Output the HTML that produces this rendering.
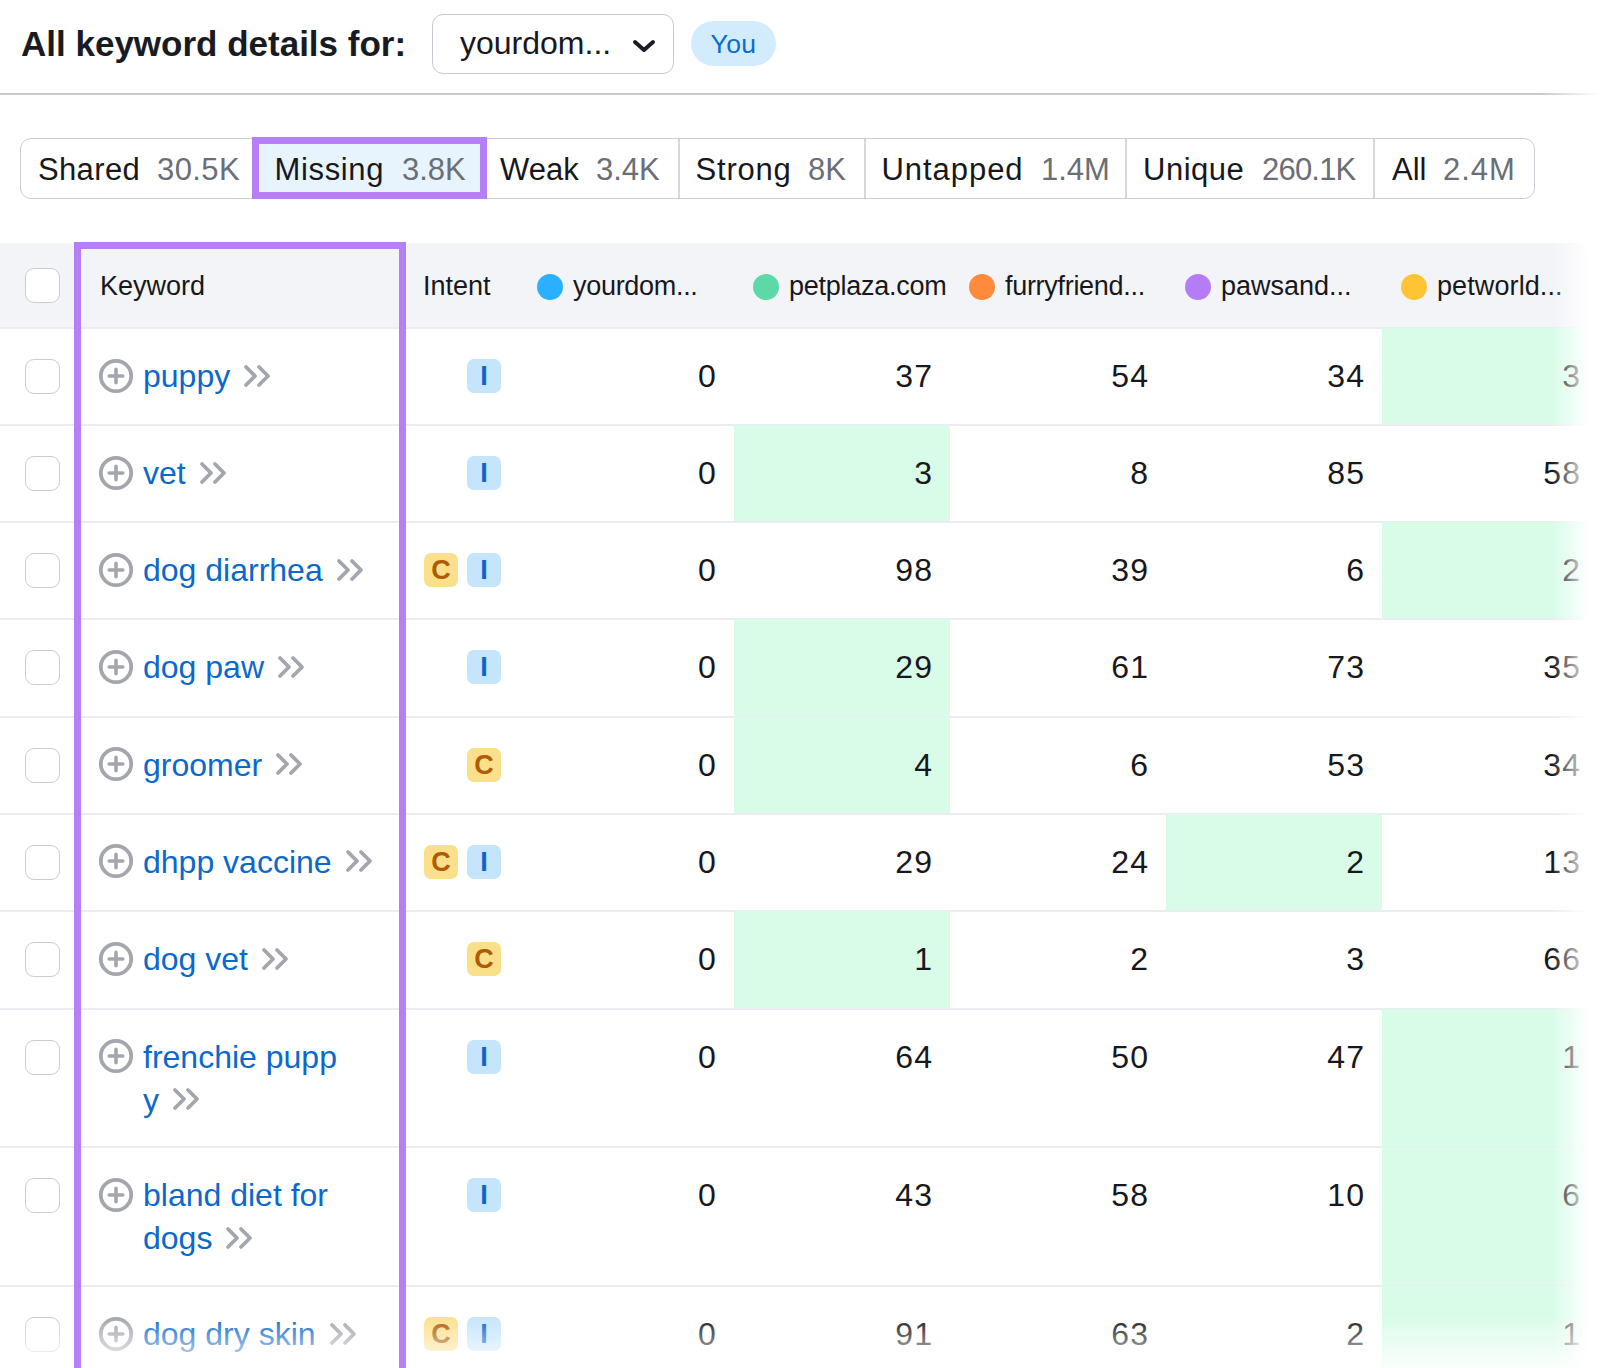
<!DOCTYPE html>
<html><head><meta charset="utf-8">
<style>
*{box-sizing:border-box;margin:0;padding:0}
html,body{width:1600px;height:1368px;overflow:hidden;background:#fff}
body{position:relative;font-family:"Liberation Sans",sans-serif;color:#17181c}
.a{position:absolute;white-space:nowrap}
.title{left:21px;top:23px;font-size:35px;font-weight:700;line-height:42px;color:#191b23}
.dd{left:432px;top:13.5px;width:242px;height:60.5px;border:1.7px solid #c6c9d0;border-radius:11px}
.ddt{left:460px;top:22px;font-size:32px;line-height:42px;color:#17181c}
.you{left:691px;top:21px;width:85px;height:45px;border-radius:23px;background:#d3ecfd;color:#0a6bd1;font-size:26.5px;line-height:46px;text-align:center;letter-spacing:.4px}
.sep{left:0;top:92.5px;width:1600px;height:2.5px;background:linear-gradient(90deg,#c7cad1 0,#c7cad1 1540px,rgba(199,202,209,0) 1600px)}
.tabs{left:19.5px;top:138px;width:1515.5px;height:61px;border:1.7px solid #cacdd4;border-radius:11px}
.tsep{top:139px;width:1.5px;height:59px;background:#d5d7dc}
.tl{top:148.5px;font-size:31px;line-height:42px;color:#17181c}
.tc{top:148.5px;font-size:31px;line-height:42px;color:#6b6e76}
.miss{left:252px;top:137px;width:235px;height:62px;border:7.5px solid #b77ff6;background:#e7f4fd}
.hdr{left:0;top:242.5px;width:1600px;height:84.5px;background:#f3f4f8}
.ht{font-size:27px;line-height:36px;color:#17181c;top:268px}
.dot{width:26px;height:26px;border-radius:50%;top:274px}
.cb{left:24.8px;width:35px;height:35px;border:1.7px solid #cbccd2;border-radius:9px;background:#fff}
.line{left:0;width:1600px;height:2px;background:#ebecf1}
.green{background:#d9fce8}
.kw{left:143px;font-size:32px;line-height:43px;color:#0b68cc}
.num{font-size:32px;line-height:43px;color:#17181c;text-align:right;width:120px;letter-spacing:1.2px}
.badge{width:34px;height:34px;border-radius:7px;font-size:27px;font-weight:700;line-height:35px;text-align:center}
.bi{background:#c5e5fd;color:#0a64d0;left:467px}
.bc{background:#fbe08c;color:#b05b06}
.purple{left:74px;top:242px;width:332px;height:1140px;border:7px solid #b77ff6;border-bottom:none}
.fadeR{left:1500px;top:100px;width:100px;height:1268px;background:linear-gradient(90deg,rgba(255,255,255,0) 0,rgba(255,255,255,0) 52%,#fff 89%)}
.fadeB{left:0;top:1316px;width:1600px;height:52px;background:linear-gradient(180deg,rgba(255,255,255,0) 0,rgba(255,255,255,.88) 100%)}
</style></head>
<body>
<div class="a title">All keyword details for:</div>
<div class="a dd"></div>
<div class="a ddt">yourdom...</div>
<svg class="a" style="left:629.5px;top:37px" width="28" height="18" viewBox="0 0 28 18"><path d="M5 5 L14 13 L23 5" fill="none" stroke="#1b1d24" stroke-width="4" stroke-linecap="round" stroke-linejoin="round"/></svg>
<div class="a you">You</div>
<div class="a sep"></div>

<div class="a tabs"></div>
<div class="a miss"></div>
<div class="a tsep" style="left:678px"></div>
<div class="a tsep" style="left:864px"></div>
<div class="a tsep" style="left:1125px"></div>
<div class="a tsep" style="left:1373px"></div>
<div class="a tl" style="left:38px;letter-spacing:.35px">Shared</div><div class="a tc" style="left:157px;letter-spacing:.4px">30.5K</div>
<div class="a tl" style="left:274.5px;letter-spacing:.65px">Missing</div><div class="a tc" style="left:402px">3.8K</div>
<div class="a tl" style="left:500px">Weak</div><div class="a tc" style="left:596px">3.4K</div>
<div class="a tl" style="left:695.5px;letter-spacing:.8px">Strong</div><div class="a tc" style="left:808px">8K</div>
<div class="a tl" style="left:881.5px;letter-spacing:.95px">Untapped</div><div class="a tc" style="left:1041px">1.4M</div>
<div class="a tl" style="left:1143px;letter-spacing:.5px">Unique</div><div class="a tc" style="left:1262px;letter-spacing:-.8px">260.1K</div>
<div class="a tl" style="left:1392px">All</div><div class="a tc" style="left:1443px;letter-spacing:1px">2.4M</div>

<div class="a hdr"></div>
<div class="a line" style="top:327px"></div>

<div class="a cb" style="top:267.5px"></div>
<div class="a ht" style="left:100px">Keyword</div>
<div class="a ht" style="left:423px">Intent</div>
<div class="a dot" style="left:537px;background:#2bb0ff"></div>
<div class="a ht" style="left:573px;letter-spacing:-0.3px">yourdom...</div>
<div class="a dot" style="left:753px;background:#5dd9a8"></div>
<div class="a ht" style="left:789px;letter-spacing:-0.25px">petplaza.com</div>
<div class="a dot" style="left:969px;background:#ff8a3d"></div>
<div class="a ht" style="left:1005px;letter-spacing:-0.3px">furryfriend...</div>
<div class="a dot" style="left:1185px;background:#b57cf7"></div>
<div class="a ht" style="left:1221px;letter-spacing:0px">pawsand...</div>
<div class="a dot" style="left:1401px;background:#ffc433"></div>
<div class="a ht" style="left:1437px;letter-spacing:0.1px">petworld...</div>
<div class="a green" style="left:1382px;top:328px;width:216px;height:97px"></div>
<div class="a line" style="top:424px"></div>
<div class="a green" style="left:734px;top:425px;width:216px;height:97px"></div>
<div class="a line" style="top:521px"></div>
<div class="a green" style="left:1382px;top:522px;width:216px;height:97px"></div>
<div class="a line" style="top:618px"></div>
<div class="a green" style="left:734px;top:619px;width:216px;height:97.5px"></div>
<div class="a line" style="top:715.5px"></div>
<div class="a green" style="left:734px;top:716.5px;width:216px;height:97px"></div>
<div class="a line" style="top:812.5px"></div>
<div class="a green" style="left:1166px;top:813.5px;width:216px;height:97.5px"></div>
<div class="a line" style="top:910.0px"></div>
<div class="a green" style="left:734px;top:911px;width:216px;height:97.5px"></div>
<div class="a line" style="top:1007.5px"></div>
<div class="a green" style="left:1382px;top:1008.5px;width:216px;height:138.5px"></div>
<div class="a line" style="top:1146.0px"></div>
<div class="a green" style="left:1382px;top:1147px;width:216px;height:139px"></div>
<div class="a line" style="top:1285px"></div>
<div class="a green" style="left:1382px;top:1286px;width:216px;height:120px"></div>
<div class="a line" style="top:1405px"></div>
<div class="a cb" style="top:359.0px"></div>
<svg class="a" style="left:98px;top:357.7px" width="36" height="36" viewBox="0 0 36 36"><circle cx="18" cy="18" r="15.2" fill="none" stroke="#a3a6ad" stroke-width="3.8"/><path d="M18 11.2V24.8M11.2 18H24.8" stroke="#a3a6ad" stroke-width="3.6" stroke-linecap="round"/></svg>
<div class="a kw" style="top:355.0px">puppy<svg style="display:inline-block;vertical-align:top;margin:8.5px 0 0 13px" width="28" height="24" viewBox="0 0 28 24"><path d="M3 3L12 12L3 21M16 3L25 12L16 21" fill="none" stroke="#a3a6ad" stroke-width="3.8" stroke-linecap="round" stroke-linejoin="round"/></svg></div>
<div class="a badge bi" style="top:359.1px">I</div>
<div class="a num" style="left:597px;top:355.0px">0</div>
<div class="a num" style="left:813.2px;top:355.0px">37</div>
<div class="a num" style="left:1029.2px;top:355.0px">54</div>
<div class="a num" style="left:1245.2px;top:355.0px">34</div>
<div class="a num" style="left:1461.2px;top:355.0px">3</div>
<div class="a cb" style="top:456.0px"></div>
<svg class="a" style="left:98px;top:454.7px" width="36" height="36" viewBox="0 0 36 36"><circle cx="18" cy="18" r="15.2" fill="none" stroke="#a3a6ad" stroke-width="3.8"/><path d="M18 11.2V24.8M11.2 18H24.8" stroke="#a3a6ad" stroke-width="3.6" stroke-linecap="round"/></svg>
<div class="a kw" style="top:452.0px">vet<svg style="display:inline-block;vertical-align:top;margin:8.5px 0 0 13px" width="28" height="24" viewBox="0 0 28 24"><path d="M3 3L12 12L3 21M16 3L25 12L16 21" fill="none" stroke="#a3a6ad" stroke-width="3.8" stroke-linecap="round" stroke-linejoin="round"/></svg></div>
<div class="a badge bi" style="top:456.1px">I</div>
<div class="a num" style="left:597px;top:452.0px">0</div>
<div class="a num" style="left:813.2px;top:452.0px">3</div>
<div class="a num" style="left:1029.2px;top:452.0px">8</div>
<div class="a num" style="left:1245.2px;top:452.0px">85</div>
<div class="a num" style="left:1461.2px;top:452.0px">58</div>
<div class="a cb" style="top:553.0px"></div>
<svg class="a" style="left:98px;top:551.7px" width="36" height="36" viewBox="0 0 36 36"><circle cx="18" cy="18" r="15.2" fill="none" stroke="#a3a6ad" stroke-width="3.8"/><path d="M18 11.2V24.8M11.2 18H24.8" stroke="#a3a6ad" stroke-width="3.6" stroke-linecap="round"/></svg>
<div class="a kw" style="top:549.0px">dog diarrhea<svg style="display:inline-block;vertical-align:top;margin:8.5px 0 0 13px" width="28" height="24" viewBox="0 0 28 24"><path d="M3 3L12 12L3 21M16 3L25 12L16 21" fill="none" stroke="#a3a6ad" stroke-width="3.8" stroke-linecap="round" stroke-linejoin="round"/></svg></div>
<div class="a badge bc" style="left:424px;top:553.1px">C</div>
<div class="a badge bi" style="top:553.1px">I</div>
<div class="a num" style="left:597px;top:549.0px">0</div>
<div class="a num" style="left:813.2px;top:549.0px">98</div>
<div class="a num" style="left:1029.2px;top:549.0px">39</div>
<div class="a num" style="left:1245.2px;top:549.0px">6</div>
<div class="a num" style="left:1461.2px;top:549.0px">2</div>
<div class="a cb" style="top:650.0px"></div>
<svg class="a" style="left:98px;top:648.7px" width="36" height="36" viewBox="0 0 36 36"><circle cx="18" cy="18" r="15.2" fill="none" stroke="#a3a6ad" stroke-width="3.8"/><path d="M18 11.2V24.8M11.2 18H24.8" stroke="#a3a6ad" stroke-width="3.6" stroke-linecap="round"/></svg>
<div class="a kw" style="top:646.0px">dog paw<svg style="display:inline-block;vertical-align:top;margin:8.5px 0 0 13px" width="28" height="24" viewBox="0 0 28 24"><path d="M3 3L12 12L3 21M16 3L25 12L16 21" fill="none" stroke="#a3a6ad" stroke-width="3.8" stroke-linecap="round" stroke-linejoin="round"/></svg></div>
<div class="a badge bi" style="top:650.1px">I</div>
<div class="a num" style="left:597px;top:646.0px">0</div>
<div class="a num" style="left:813.2px;top:646.0px">29</div>
<div class="a num" style="left:1029.2px;top:646.0px">61</div>
<div class="a num" style="left:1245.2px;top:646.0px">73</div>
<div class="a num" style="left:1461.2px;top:646.0px">35</div>
<div class="a cb" style="top:747.5px"></div>
<svg class="a" style="left:98px;top:746.2px" width="36" height="36" viewBox="0 0 36 36"><circle cx="18" cy="18" r="15.2" fill="none" stroke="#a3a6ad" stroke-width="3.8"/><path d="M18 11.2V24.8M11.2 18H24.8" stroke="#a3a6ad" stroke-width="3.6" stroke-linecap="round"/></svg>
<div class="a kw" style="top:743.5px">groomer<svg style="display:inline-block;vertical-align:top;margin:8.5px 0 0 13px" width="28" height="24" viewBox="0 0 28 24"><path d="M3 3L12 12L3 21M16 3L25 12L16 21" fill="none" stroke="#a3a6ad" stroke-width="3.8" stroke-linecap="round" stroke-linejoin="round"/></svg></div>
<div class="a badge bc" style="left:467px;top:747.6px">C</div>
<div class="a num" style="left:597px;top:743.5px">0</div>
<div class="a num" style="left:813.2px;top:743.5px">4</div>
<div class="a num" style="left:1029.2px;top:743.5px">6</div>
<div class="a num" style="left:1245.2px;top:743.5px">53</div>
<div class="a num" style="left:1461.2px;top:743.5px">34</div>
<div class="a cb" style="top:844.5px"></div>
<svg class="a" style="left:98px;top:843.2px" width="36" height="36" viewBox="0 0 36 36"><circle cx="18" cy="18" r="15.2" fill="none" stroke="#a3a6ad" stroke-width="3.8"/><path d="M18 11.2V24.8M11.2 18H24.8" stroke="#a3a6ad" stroke-width="3.6" stroke-linecap="round"/></svg>
<div class="a kw" style="top:840.5px">dhpp vaccine<svg style="display:inline-block;vertical-align:top;margin:8.5px 0 0 13px" width="28" height="24" viewBox="0 0 28 24"><path d="M3 3L12 12L3 21M16 3L25 12L16 21" fill="none" stroke="#a3a6ad" stroke-width="3.8" stroke-linecap="round" stroke-linejoin="round"/></svg></div>
<div class="a badge bc" style="left:424px;top:844.6px">C</div>
<div class="a badge bi" style="top:844.6px">I</div>
<div class="a num" style="left:597px;top:840.5px">0</div>
<div class="a num" style="left:813.2px;top:840.5px">29</div>
<div class="a num" style="left:1029.2px;top:840.5px">24</div>
<div class="a num" style="left:1245.2px;top:840.5px">2</div>
<div class="a num" style="left:1461.2px;top:840.5px">13</div>
<div class="a cb" style="top:942.0px"></div>
<svg class="a" style="left:98px;top:940.7px" width="36" height="36" viewBox="0 0 36 36"><circle cx="18" cy="18" r="15.2" fill="none" stroke="#a3a6ad" stroke-width="3.8"/><path d="M18 11.2V24.8M11.2 18H24.8" stroke="#a3a6ad" stroke-width="3.6" stroke-linecap="round"/></svg>
<div class="a kw" style="top:938.0px">dog vet<svg style="display:inline-block;vertical-align:top;margin:8.5px 0 0 13px" width="28" height="24" viewBox="0 0 28 24"><path d="M3 3L12 12L3 21M16 3L25 12L16 21" fill="none" stroke="#a3a6ad" stroke-width="3.8" stroke-linecap="round" stroke-linejoin="round"/></svg></div>
<div class="a badge bc" style="left:467px;top:942.1px">C</div>
<div class="a num" style="left:597px;top:938.0px">0</div>
<div class="a num" style="left:813.2px;top:938.0px">1</div>
<div class="a num" style="left:1029.2px;top:938.0px">2</div>
<div class="a num" style="left:1245.2px;top:938.0px">3</div>
<div class="a num" style="left:1461.2px;top:938.0px">66</div>
<div class="a cb" style="top:1039.5px"></div>
<svg class="a" style="left:98px;top:1038.2px" width="36" height="36" viewBox="0 0 36 36"><circle cx="18" cy="18" r="15.2" fill="none" stroke="#a3a6ad" stroke-width="3.8"/><path d="M18 11.2V24.8M11.2 18H24.8" stroke="#a3a6ad" stroke-width="3.6" stroke-linecap="round"/></svg>
<div class="a kw" style="top:1035.5px">frenchie pupp</div>
<div class="a kw" style="top:1078.5px">y<svg style="display:inline-block;vertical-align:top;margin:8.5px 0 0 13px" width="28" height="24" viewBox="0 0 28 24"><path d="M3 3L12 12L3 21M16 3L25 12L16 21" fill="none" stroke="#a3a6ad" stroke-width="3.8" stroke-linecap="round" stroke-linejoin="round"/></svg></div>
<div class="a badge bi" style="top:1039.6px">I</div>
<div class="a num" style="left:597px;top:1035.5px">0</div>
<div class="a num" style="left:813.2px;top:1035.5px">64</div>
<div class="a num" style="left:1029.2px;top:1035.5px">50</div>
<div class="a num" style="left:1245.2px;top:1035.5px">47</div>
<div class="a num" style="left:1461.2px;top:1035.5px">1</div>
<div class="a cb" style="top:1178.0px"></div>
<svg class="a" style="left:98px;top:1176.7px" width="36" height="36" viewBox="0 0 36 36"><circle cx="18" cy="18" r="15.2" fill="none" stroke="#a3a6ad" stroke-width="3.8"/><path d="M18 11.2V24.8M11.2 18H24.8" stroke="#a3a6ad" stroke-width="3.6" stroke-linecap="round"/></svg>
<div class="a kw" style="top:1174.0px">bland diet for</div>
<div class="a kw" style="top:1217.0px">dogs<svg style="display:inline-block;vertical-align:top;margin:8.5px 0 0 13px" width="28" height="24" viewBox="0 0 28 24"><path d="M3 3L12 12L3 21M16 3L25 12L16 21" fill="none" stroke="#a3a6ad" stroke-width="3.8" stroke-linecap="round" stroke-linejoin="round"/></svg></div>
<div class="a badge bi" style="top:1178.1px">I</div>
<div class="a num" style="left:597px;top:1174.0px">0</div>
<div class="a num" style="left:813.2px;top:1174.0px">43</div>
<div class="a num" style="left:1029.2px;top:1174.0px">58</div>
<div class="a num" style="left:1245.2px;top:1174.0px">10</div>
<div class="a num" style="left:1461.2px;top:1174.0px">6</div>
<div class="a cb" style="top:1317.0px"></div>
<svg class="a" style="left:98px;top:1315.7px" width="36" height="36" viewBox="0 0 36 36"><circle cx="18" cy="18" r="15.2" fill="none" stroke="#a3a6ad" stroke-width="3.8"/><path d="M18 11.2V24.8M11.2 18H24.8" stroke="#a3a6ad" stroke-width="3.6" stroke-linecap="round"/></svg>
<div class="a kw" style="top:1313.0px">dog dry skin<svg style="display:inline-block;vertical-align:top;margin:8.5px 0 0 13px" width="28" height="24" viewBox="0 0 28 24"><path d="M3 3L12 12L3 21M16 3L25 12L16 21" fill="none" stroke="#a3a6ad" stroke-width="3.8" stroke-linecap="round" stroke-linejoin="round"/></svg></div>
<div class="a badge bc" style="left:424px;top:1317.1px">C</div>
<div class="a badge bi" style="top:1317.1px">I</div>
<div class="a num" style="left:597px;top:1313.0px">0</div>
<div class="a num" style="left:813.2px;top:1313.0px">91</div>
<div class="a num" style="left:1029.2px;top:1313.0px">63</div>
<div class="a num" style="left:1245.2px;top:1313.0px">2</div>
<div class="a num" style="left:1461.2px;top:1313.0px">1</div>
<div class="a fadeB"></div>
<div class="a fadeR"></div>
<div class="a purple"></div>
</body></html>
